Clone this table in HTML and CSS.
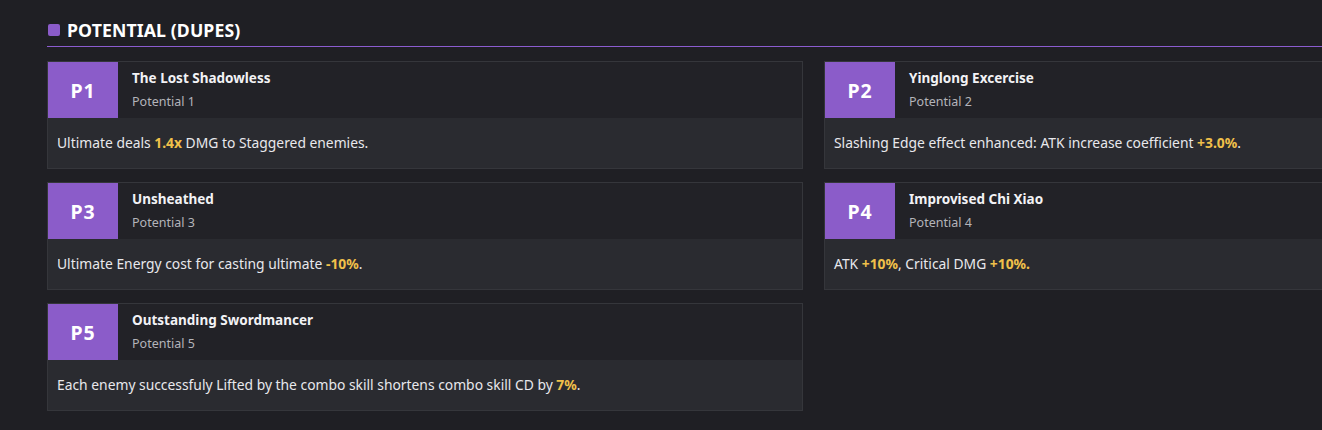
FILE: index.html
```html
<!DOCTYPE html>
<html>
<head>
<meta charset="utf-8">
<link rel="stylesheet" href="styles.css">
</head>
<body>
<section class="section">
  <h2 class="section-title"><span class="title-mark"></span>POTENTIAL (DUPES)</h2>
  <div class="grid">
    <div class="card">
      <div class="card-head">
        <div class="badge">P1</div>
        <div class="info"><div class="name">The Lost Shadowless</div><div class="sub">Potential 1</div></div>
      </div>
      <div class="card-body"><p class="desc">Ultimate deals <b class="hl">1.4x</b> DMG to Staggered enemies.</p></div>
    </div>
    <div class="card">
      <div class="card-head">
        <div class="badge">P2</div>
        <div class="info"><div class="name">Yinglong Excercise</div><div class="sub">Potential 2</div></div>
      </div>
      <div class="card-body"><p class="desc">Slashing Edge effect enhanced: ATK increase coefficient <b class="hl">+3.0%</b>.</p></div>
    </div>
    <div class="card">
      <div class="card-head">
        <div class="badge">P3</div>
        <div class="info"><div class="name">Unsheathed</div><div class="sub">Potential 3</div></div>
      </div>
      <div class="card-body"><p class="desc">Ultimate Energy cost for casting ultimate <b class="hl">-10%</b>.</p></div>
    </div>
    <div class="card">
      <div class="card-head">
        <div class="badge">P4</div>
        <div class="info"><div class="name">Improvised Chi Xiao</div><div class="sub">Potential 4</div></div>
      </div>
      <div class="card-body"><p class="desc">ATK <b class="hl">+10%</b>, Critical DMG <b class="hl">+10%.</b></p></div>
    </div>
    <div class="card">
      <div class="card-head">
        <div class="badge">P5</div>
        <div class="info"><div class="name">Outstanding Swordmancer</div><div class="sub">Potential 5</div></div>
      </div>
      <div class="card-body"><p class="desc">Each enemy successfuly Lifted by the combo skill shortens combo skill CD by <b class="hl">7%</b>.</p></div>
    </div>
  </div>
</section>
</body>
</html>
```
FILE: styles.css
```css
html, body {
  margin: 0;
  padding: 0;
  background: #1f1f24;
  overflow: hidden;
  font-family: "Noto Sans", "Open Sans", sans-serif;
  color: #e6e6ea;
}
.section {
  width: 1533px;
  padding: 15px 0 0 47px;
}
.section-title {
  display: flex;
  align-items: center;
  gap: 7px;
  margin: 0;
  padding: 0 0 1px 1px;
  height: 30px;
  border-bottom: 1px solid #8b5cd0;
  font-size: 17.7px;
  font-weight: 700;
  color: #ffffff;
  letter-spacing: 0.1px;
}
.title-mark {
  width: 12px;
  height: 12px;
  border-radius: 2px;
  background: #8b5cc9;
}
.grid {
  display: grid;
  grid-template-columns: 756px 756px;
  column-gap: 21px;
  row-gap: 13px;
  margin-top: 14px;
  align-items: start;
}
.card {
  border: 1px solid #35363b;
  background: #222227;
}
.card-head {
  display: flex;
  height: 56px;
}
.badge {
  width: 70px;
  height: 56px;
  background: #8b5cc9;
  color: #fff;
  font-weight: 700;
  font-size: 19.5px;
  letter-spacing: 0.8px;
  display: flex;
  align-items: center;
  justify-content: center;
}
.info {
  padding: 7px 14px 0;
}
.name {
  font-size: 13.5px;
  font-weight: 700;
  color: #f2f2f5;
  line-height: 18px;
}
.sub {
  font-size: 12.5px;
  color: #b4b4ba;
  line-height: 18px;
  margin-top: 6px;
}
.card-body {
  background: #2a2b30;
  height: 50px;
  padding: 0 9px;
  display: flex;
  align-items: center;
}
.desc {
  margin: 0;
  font-size: 13.85px;
  line-height: 20px;
  color: #e8e8ec;
}
.hl {
  color: #f0c04a;
  font-weight: 700;
}
```
